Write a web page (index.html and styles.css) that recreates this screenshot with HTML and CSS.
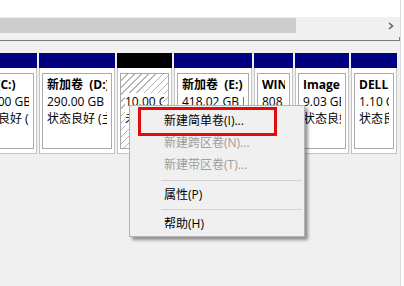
FILE: index.html
```html
<!DOCTYPE html>
<html lang="zh-CN">
<head>
    <meta charset="UTF-8">
    <meta name="viewport" content="width=device-width, initial-scale=1.0">
    <title>磁盘管理</title>
    <link rel="stylesheet" href="styles.css">
</head>
<body>
    <div class="window">
        <!-- Lista de volúmenes (parte superior) -->
        <div class="volume-list"></div>

        <div class="hscroll">
            <div class="thumb"></div>
            <svg class="arrow" width="6" height="8" viewBox="0 0 6 8">
                <path d="M1 1 L4.5 4 L1 7" fill="none" stroke="#606060" stroke-width="1.6"/>
            </svg>
        </div>

        <div class="splitter"></div>

        <!-- Particiones del disco -->
        <div class="disk-row">
            <div class="part w1">
                <div class="part-head"></div>
                <div class="part-body">
                    <div class="part-box">
                        <div class="line name">OS&nbsp;&nbsp;(C:)</div>
                        <div class="line">100.00 GB NTFS</div>
                        <div class="line">状态良好 (启动, 页面文件)</div>
                    </div>
                </div>
            </div>
            <div class="part w2">
                <div class="part-head"></div>
                <div class="part-body">
                    <div class="part-box">
                        <div class="line name">新加卷&nbsp;&nbsp;(D:)</div>
                        <div class="line">290.00 GB NTFS</div>
                        <div class="line">状态良好 (主分区)</div>
                    </div>
                </div>
            </div>
            <div class="part w3 free">
                <div class="part-head"></div>
                <div class="part-body">
                    <div class="part-box">
                        <div class="line name"></div>
                        <div class="line"><span>10.00 GB</span></div>
                        <div class="line"><span>未分配</span></div>
                    </div>
                </div>
            </div>
            <div class="part w4">
                <div class="part-head"></div>
                <div class="part-body">
                    <div class="part-box">
                        <div class="line name">新加卷&nbsp;&nbsp;(E:)</div>
                        <div class="line">418.02 GB NTFS</div>
                        <div class="line">状态良好 (主分区)</div>
                    </div>
                </div>
            </div>
            <div class="part w5">
                <div class="part-head"></div>
                <div class="part-body">
                    <div class="part-box">
                        <div class="line name">WIN</div>
                        <div class="line">808 MB</div>
                        <div class="line">状态良好</div>
                    </div>
                </div>
            </div>
            <div class="part w6">
                <div class="part-head"></div>
                <div class="part-body">
                    <div class="part-box">
                        <div class="line name">Image</div>
                        <div class="line">9.03 GB NTFS</div>
                        <div class="line">状态良好 (OEM 分区)</div>
                    </div>
                </div>
            </div>
            <div class="part w7">
                <div class="part-head"></div>
                <div class="part-body">
                    <div class="part-box">
                        <div class="line name">DELL</div>
                        <div class="line">1.10 GB NTFS</div>
                        <div class="line">状态良好 (OEM 分区)</div>
                    </div>
                </div>
            </div>
        </div>

        <!-- Menú contextual -->
        <div class="context-menu">
            <div class="menu-item">新建简单卷(I)...</div>
            <div class="menu-item disabled">新建跨区卷(N)...</div>
            <div class="menu-item disabled">新建带区卷(T)...</div>
            <div class="menu-sep"></div>
            <div class="menu-item">属性(P)</div>
            <div class="menu-sep short"></div>
            <div class="menu-item">帮助(H)</div>
        </div>
        <div class="highlight-box"></div>
    </div>
</body>
</html>
```

FILE: styles.css
```css
body {
    margin: 0;
    padding: 0;
    background-color: #ffffff;
    font-family: "Open Sans", "Noto Sans CJK SC", sans-serif;
    font-size: 12px;
    color: #000;
}

.window {
    position: relative;
    width: 400px;
    height: 286px;
    background-color: #f0f0f0;
    border-right: 1px solid #dadada;
    overflow: hidden;
}

.volume-list {
    height: 17px;
    background-color: #fff;
}

.hscroll {
    display: flex;
    align-items: flex-start;
    height: 18px;
    padding-top: 1px;
    box-sizing: border-box;
    background-color: #f0f0f0;
}

.hscroll .thumb {
    width: 296px;
    height: 15px;
    background-color: #cdcdcd;
}

.hscroll .arrow {
    margin-left: auto;
    margin-right: 6px;
    margin-top: 4px;
}

.splitter {
    width: 400px;
    height: 4px;
    margin-top: 2px;
    box-sizing: border-box;
    border-right: 1px solid #7a7a7a;
    border-bottom: 1px solid #7a7a7a;
}

.disk-row {
    display: flex;
    gap: 2px;
    margin-top: 12px;
    margin-left: -34px;
}

.part {
    flex: none;
}

.w1 { width: 71px; }
.w2 { width: 76px; }
.w3 { width: 55px; }
.w4 { width: 78px; }
.w5 { width: 39px; }
.w6 { width: 54px; }
.w7 { width: 46px; }

.part-head {
    height: 15px;
    background-color: #000080;
}

.free .part-head {
    background-color: #000;
}

.part-body {
    background-color: #fff;
    border: 1px solid #c4c4c4;
    border-top: none;
    padding: 5px 2px 4px;
}

.part-box {
    height: 76px;
    box-sizing: border-box;
    border: 1px solid #a9a9a9;
    padding: 2px 4px 0;
    overflow: hidden;
}

.free .part-box {
    background: repeating-linear-gradient(135deg, #fff 0 4px, #b4b4b4 4px 5px);
}

.free .line span {
    background-color: #fff;
}

.line {
    height: 17px;
    line-height: 17px;
    white-space: nowrap;
    overflow: hidden;
}

.line.name {
    font-weight: bold;
}

.context-menu {
    position: absolute;
    left: 129px;
    top: 105px;
    width: 176px;
    box-sizing: border-box;
    padding: 4px 2px 1px;
    background-color: #f0f0f0;
    border: 1px solid #b4b4b4;
    box-shadow: 3px 3px 3px rgba(0, 0, 0, 0.4);
}

.menu-item {
    height: 22px;
    line-height: 22px;
    padding-left: 32px;
    white-space: nowrap;
}

.menu-item.disabled {
    color: #9d9d9d;
}

.menu-sep {
    height: 8px;
    margin-left: 29px;
    position: relative;
}

.menu-sep::after {
    content: "";
    position: absolute;
    left: 0;
    right: 0;
    top: 4px;
    border-top: 1px solid #d2d2d2;
}

.menu-sep.short {
    height: 7px;
}

.menu-sep.short::after {
    top: 3px;
}

.highlight-box {
    position: absolute;
    left: 138px;
    top: 107px;
    width: 139px;
    height: 29px;
    box-sizing: border-box;
    border: 3px solid #e20a0a;
}
```
